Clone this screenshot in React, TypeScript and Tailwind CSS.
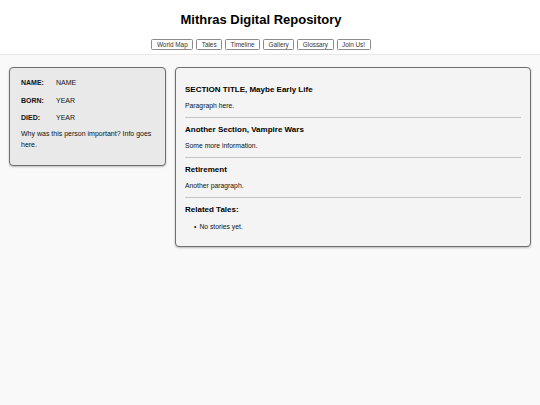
const navItems = ["World Map", "Tales", "Timeline", "Gallery", "Glossary", "Join Us!"];

const facts = [
  { label: "NAME:", value: "NAME" },
  { label: "BORN:", value: "YEAR" },
  { label: "DIED:", value: "YEAR" },
];

const sections = [
  { title: "SECTION TITLE, Maybe Early Life", body: "Paragraph here." },
  { title: "Another Section, Vampire Wars", body: "Some more information." },
  { title: "Retirement", body: "Another paragraph." },
];

export default function App() {
  return (
    <div className="min-h-[405px] bg-[#f9f9f9] text-black font-['Liberation_Sans',Arial,sans-serif]">
      {/* HEADER */}
      <header className="bg-white border-b border-[#e8e8e8] h-[55px] pr-[18px] flex flex-col items-center">
        <h1 className="mt-[12px] text-[13px] leading-[16px] font-bold">Mithras Digital Repository</h1>
        <nav className="mt-[11px] flex gap-[3px]">
          {navItems.map((item) => (
            <button
              key={item}
              className="h-[11px] px-[4.5px] bg-white border border-[#8a8a8a] rounded-[1.5px] text-[6.4px] leading-[9px] text-[#333]"
            >
              {item}
            </button>
          ))}
        </nav>
      </header>

      <main className="flex items-start gap-[9px] px-[9px] pt-[12px]">
        {/* INFO CARD */}
        <aside className="w-[157px] shrink-0 bg-[#e9e9e9] border border-[#6e6e6e] rounded-[4px] shadow-[0_1px_2px_rgba(0,0,0,0.25)] pl-[11px] pr-[8px] pt-[10px] pb-[15px]">
          <div className="flex flex-col gap-[8.5px]">
            {facts.map((f) => (
              <div key={f.label} className="flex text-[7px] leading-[9px] text-[#111]">
                <span className="w-[35px] font-bold">{f.label}</span>
                <span>{f.value}</span>
              </div>
            ))}
          </div>
          <p className="mt-[6px] text-[7px] leading-[11px] text-[#111]">
            Why was this person important? Info goes here.
          </p>
        </aside>

        {/* CONTENT CARD */}
        <section className="flex-1 bg-[#f4f4f4] border border-[#6e6e6e] rounded-[4px] shadow-[0_1px_2px_rgba(0,0,0,0.25)] px-[9px] pt-[17px] pb-[15px]">
          {sections.map((s) => (
            <div key={s.title}>
              <h3 className="text-[8px] leading-[10px] font-bold">{s.title}</h3>
              <p className="mt-[6px] text-[6.8px] leading-[9px] text-[#111]">{s.body}</p>
              <hr className="my-[7px] border-t border-[#c4c4c4]" />
            </div>
          ))}
          <h3 className="text-[8px] leading-[10px] font-bold">Related Tales:</h3>
          <ul className="mt-[7px] pl-[9px] text-[6.8px] leading-[9px] text-[#111]">
            <li className="flex gap-[3px]">
              <span>•</span>
              <span>No stories yet.</span>
            </li>
          </ul>
        </section>
      </main>
    </div>
  );
}
